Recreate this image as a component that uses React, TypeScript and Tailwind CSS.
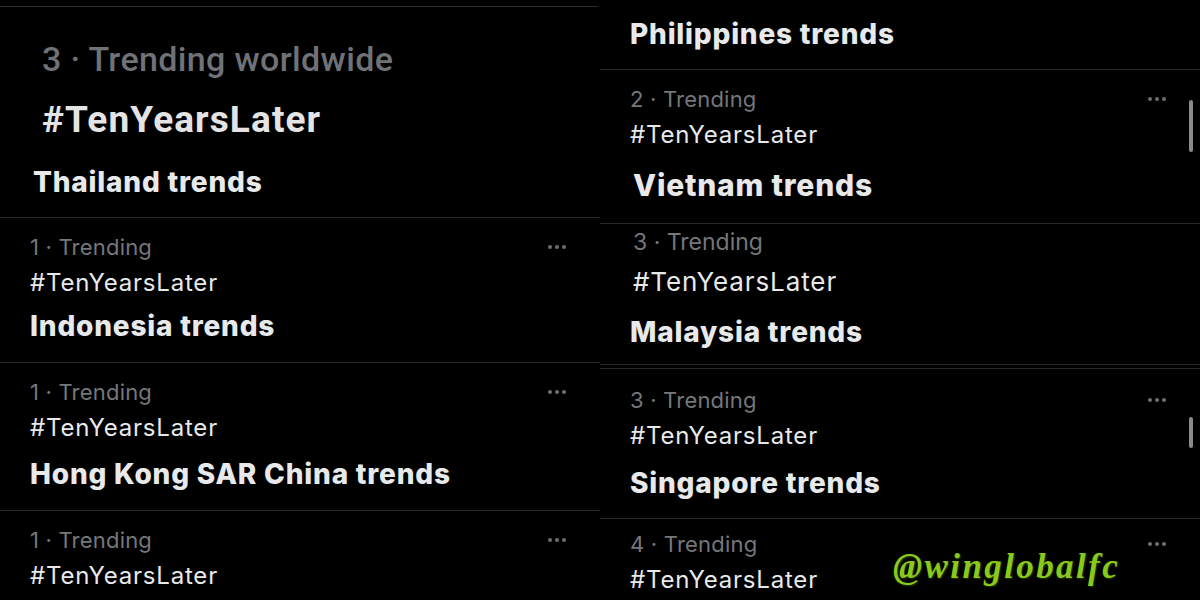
const sf = { fontFamily: "Inter, 'Noto Sans', sans-serif" };

type RowProps = {
  rank: number;
  title?: string;
  pt: number;
  hashGap?: number;
  titleGap?: number;
  big?: boolean;
  bigTitle?: boolean;
  indent?: number;
  className: string;
  children?: React.ReactNode;
};

const Dots = () => (
  <div className="flex gap-[3px] items-center">
    <span className="w-[4px] h-[4px] rounded-full bg-[#6b6e72]" />
    <span className="w-[4px] h-[4px] rounded-full bg-[#6b6e72]" />
    <span className="w-[4px] h-[4px] rounded-full bg-[#6b6e72]" />
  </div>
);

const Row = ({ rank, title, pt, hashGap = 0, titleGap = 0, big, bigTitle, indent = 30, className, children }: RowProps) => (
  <div className={"relative flex flex-col " + className} style={{ paddingTop: pt }}>
    <div className="flex items-center justify-between h-[36px] pr-[34px]">
      <span
        className={(big ? "text-[23px]" : "text-[22px] tracking-[0.2px]") + " text-[#74777c] leading-none"}
        style={{ paddingLeft: indent }}
      >
        {rank} · Trending
      </span>
      {!big && <Dots />}
    </div>
    <div
      className={(big ? "text-[26px] tracking-[0.9px]" : "text-[24px] tracking-[0.8px]") + " h-[36px] flex items-center text-[#e7e9ea] leading-none"}
      style={{ paddingLeft: indent, marginTop: hashGap }}
    >
      #TenYearsLater
    </div>
    {title && (
      <div
        className={(bigTitle ? "text-[30px]" : "text-[28px]") + " h-[50px] flex items-center font-extrabold tracking-[0.8px] text-[#e7e9ea] leading-none"}
        style={{ paddingLeft: bigTitle ? 33 : 30, marginTop: titleGap }}
      >
        {title}
      </div>
    )}
    {children}
  </div>
);

const Scroll = ({ top, h }: { top: number; h: number }) => (
  <span className="absolute right-[7px] w-[4px] rounded-full bg-[#8a8a8a]" style={{ top, height: h }} />
);

export default function App() {
  return (
    <div className="relative w-[1200px] h-[600px] bg-black flex overflow-hidden" style={sf}>
      {/* left strip */}
      <div className="w-[600px] flex flex-col">
        <div className="h-[218px] flex flex-col border-b border-[#25282b]">
          <div className="mt-[6px] h-[1px] w-[598px] bg-[#2c2f33]" />
          <div
            className="mt-[32px] h-[40px] pl-[42px] flex items-center text-[34px] font-medium tracking-[0.35px] text-[#6f7276] leading-none"
            style={{ fontFamily: "Roboto, sans-serif" }}
          >
            3 · Trending worldwide
          </div>
          <div
            className="mt-[18px] h-[44px] pl-[42px] flex items-center text-[37px] font-bold tracking-[1.1px] text-[#e4e4e4] leading-none"
            style={{ fontFamily: "Roboto, sans-serif" }}
          >
            #TenYearsLater
          </div>
          <div className="mt-[23px] h-[36px] pl-[33px] flex items-center text-[28px] font-extrabold tracking-[0.8px] text-[#e7e9ea] leading-none">
            Thailand trends
          </div>
        </div>
        <Row rank={1} title="Indonesia trends" pt={11} className="h-[145px] border-b border-[#25282b]" />
        <Row rank={1} title="Hong Kong SAR China trends" pt={11} titleGap={3} className="h-[148px] border-b border-[#25282b]" />
        <Row rank={1} pt={11} className="flex-1" />
      </div>

      {/* right strip */}
      <div className="w-[600px] flex flex-col">
        <div className="h-[70px] pl-[30px] pt-[14px] border-b border-[#25282b]">
          <div className="h-[40px] flex items-center text-[28px] font-extrabold tracking-[0.8px] text-[#e7e9ea] leading-none">
            Philippines trends
          </div>
        </div>
        <Row rank={2} title="Vietnam trends" pt={11} titleGap={7} bigTitle className="h-[154px] border-b border-[#25282b]">
          <Scroll top={30} h={52} />
        </Row>
        <Row rank={3} title="Malaysia trends" pt={0} hashGap={4} titleGap={7} big indent={33} className="h-[141px] border-b border-[#25282b]" />
        <div className="h-[4px] border-b border-[#25282b]" />
        <Row rank={3} title="Singapore trends" pt={13} titleGap={4} className="h-[150px] border-b border-[#25282b]">
          <Scroll top={48} h={31} />
        </Row>
        <Row rank={4} pt={7} className="flex-1" />
      </div>

      {/* watermark */}
      <span
        className="absolute left-[893px] top-[549px] text-[35px] font-bold italic tracking-[2.4px] text-[#88c91b] leading-none"
        style={{ fontFamily: "'Liberation Serif', serif", textShadow: "1px 1px 2px #2a3a00" }}
      >
        @winglobalfc
      </span>
    </div>
  );
}
